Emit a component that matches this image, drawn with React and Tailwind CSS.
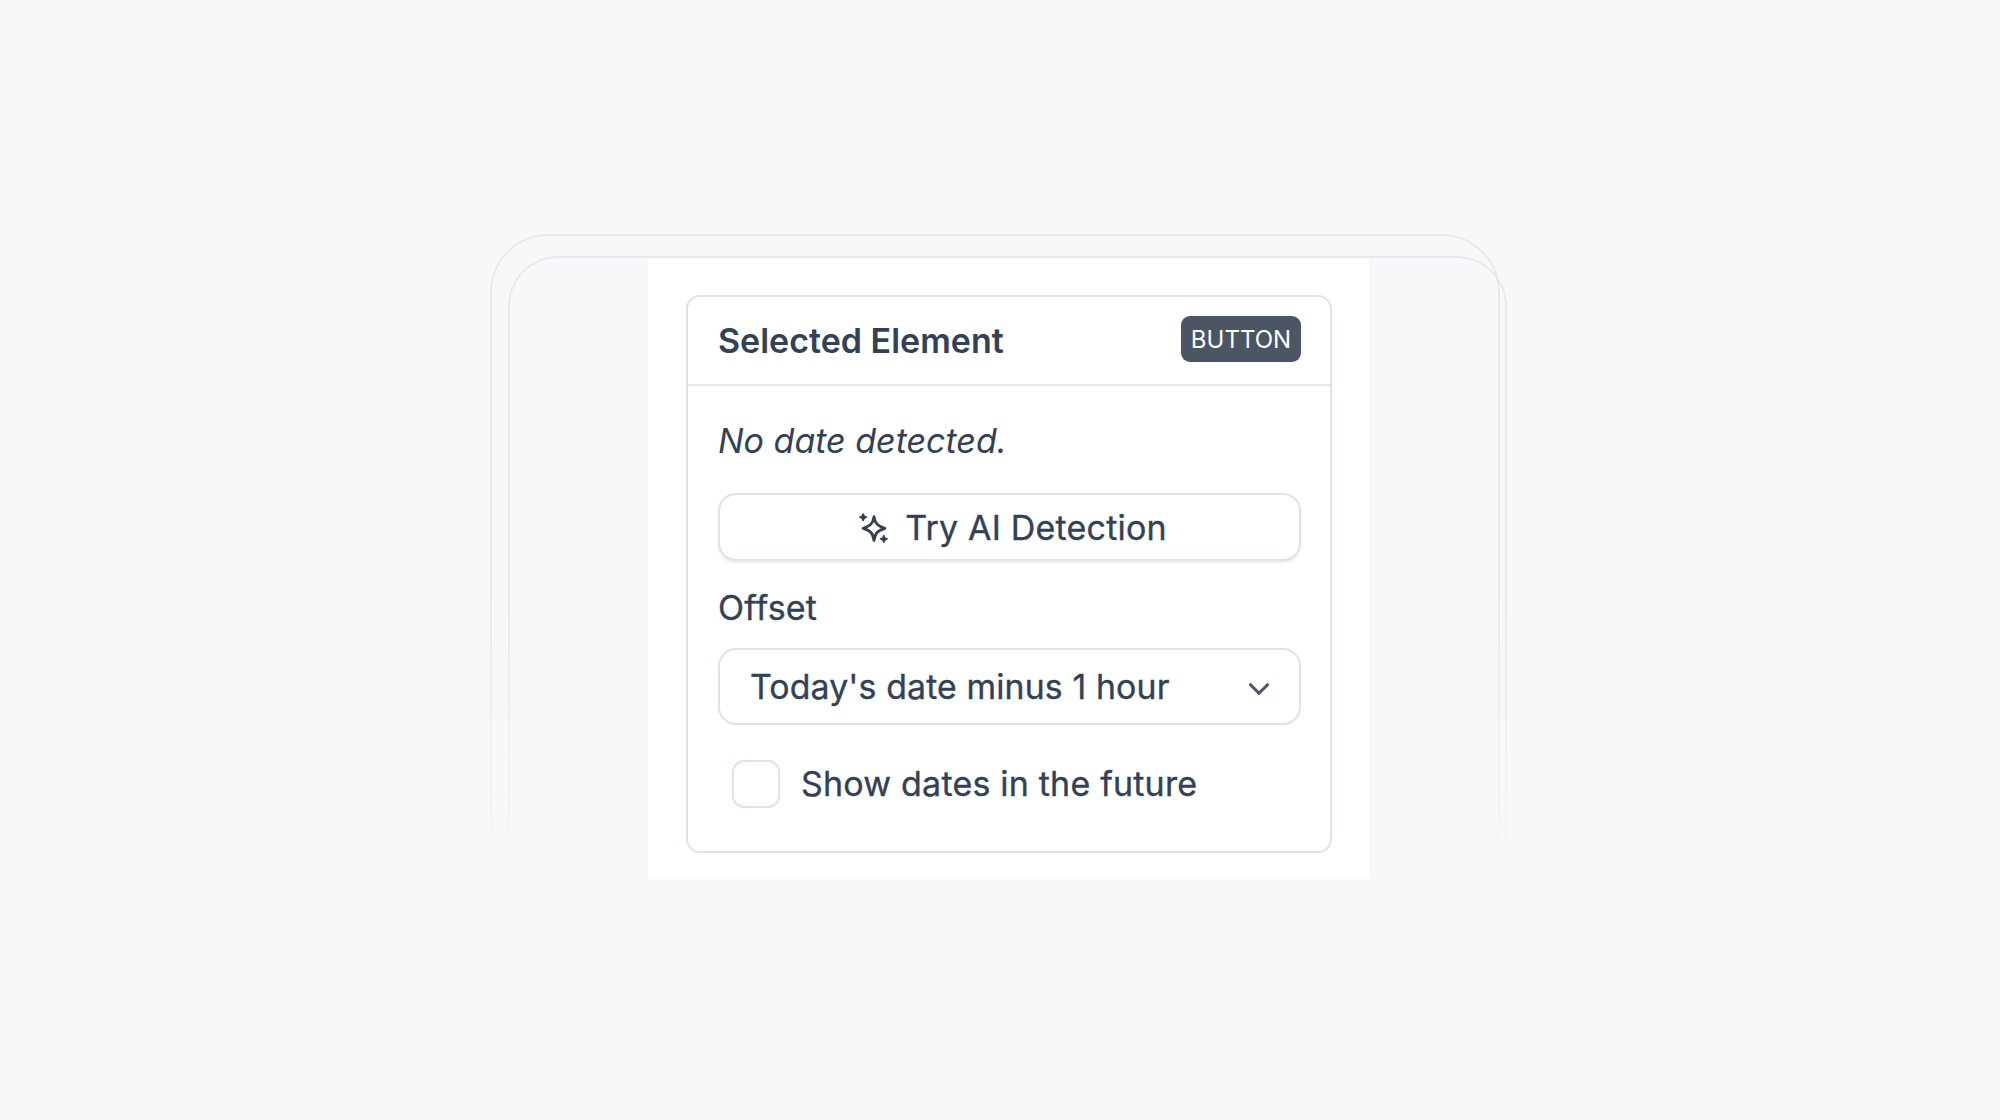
import { ChevronDown } from 'lucide-react';

function SparkleIcon() {
  return (
    <svg className="w-[31px] h-[31px] shrink-0" viewBox="0 0 30 30" fill="none" stroke="#374151" strokeWidth={2.7} strokeLinejoin="round" strokeLinecap="round">
      {/* big star */}
      <path d="M15.5 4.5 C16.6 11 18.8 13.6 26 15.8 C18.8 18 16.6 20.6 15.5 27.5 C14.4 20.6 12.2 18 5 15.8 C12.2 13.6 14.4 11 15.5 4.5 Z" />
      {/* small stars */}
      <path d="M5 2 C5.3 4 6 4.8 8 5 C6 5.3 5.3 6 5 8 C4.7 6 4 5.3 2 5 C4 4.8 4.7 4 5 2 Z" fill="#374151" strokeWidth={1.8} />
      <path d="M25 23 C25.3 25 26 25.8 28 26 C26 26.3 25.3 27 25 29 C24.7 27 24 26.3 22 26 C24 25.8 24.7 25 25 23 Z" fill="#374151" strokeWidth={1.8} />
    </svg>
  );
}

export default function App() {
  return (
    <div className="relative w-[2000px] h-[1120px] overflow-hidden bg-[#f7f8fa] font-['Inter',sans-serif] text-[#334155]">
      {/* Faded frames behind the panel */}
      <div className="absolute left-[490px] top-[234px] w-[1010px] h-[645px] rounded-[58px] border-2 border-[#e6e8eb] [mask-image:linear-gradient(to_bottom,black_55%,rgba(0,0,0,0.15)_92%,transparent_100%)]" />
      <div className="absolute left-[508px] top-[256px] w-[999px] h-[623px] rounded-[50px] border-2 border-[#e6e8eb] [mask-image:linear-gradient(to_bottom,black_55%,rgba(0,0,0,0.15)_92%,transparent_100%)]" />

      <div className="relative pl-[648px] pt-[258px]">
        <div className="w-[721px] h-[621px] bg-white pt-[37px] pl-[38px]">
          <div className="w-[646px] h-[558px] rounded-[14px] border-2 border-[#dfe3e8] bg-white">
            {/* Header */}
            <div className="h-[89px] flex items-center justify-between pl-[30px] pr-[29px] border-b-2 border-[#e5e7eb]">
              <h2 className="text-[34px] font-semibold leading-none">Selected Element</h2>
              <span className="mb-[3px] w-[120px] h-[46px] pt-[1px] flex items-center justify-center rounded-[9px] bg-[#4b5563] text-white text-[24px] leading-none">BUTTON</span>
            </div>

            {/* Body */}
            <div className="pl-[30px] pr-[29px]">
              <p className="mt-[35px] h-[40px] flex items-center text-[34px] italic leading-none">No date detected.</p>
              <button className="mt-[32px] w-full h-[68px] pl-[6px] flex items-center justify-center gap-[16px] rounded-[18px] border-2 border-[#dfe3e8] bg-white shadow-[0_2px_3px_rgba(0,0,0,0.08)] text-[34px] tracking-[0.2px] [-webkit-text-stroke:0.35px_#334155]">
                <SparkleIcon />
                Try AI Detection
              </button>
              <label className="mt-[27px] h-[40px] flex items-center text-[34px] tracking-[0.2px] leading-none [-webkit-text-stroke:0.35px_#334155]">Offset</label>
              <div className="mt-[20px] w-full h-[77px] flex items-center justify-between pl-[30px] pr-[23px] rounded-[18px] border-2 border-[#dfe3e8] text-[33.8px] tracking-[0.14px] [-webkit-text-stroke:0.35px_#334155]">
                <span className="mt-[1px]">Today's date minus 1 hour</span>
                <ChevronDown size={34} strokeWidth={2.2} className="text-[#4b5563] mt-[4px]" />
              </div>
              <div className="mt-[35px] flex items-center pl-[14px] gap-[21px]">
                <span className="w-[48px] h-[48px] rounded-[12px] border-2 border-[#dfe3e8] bg-white" />
                <span className="text-[34px] tracking-[0.2px] leading-none [-webkit-text-stroke:0.35px_#334155]">Show dates in the future</span>
              </div>
            </div>
          </div>
        </div>
      </div>
    </div>
  );
}
